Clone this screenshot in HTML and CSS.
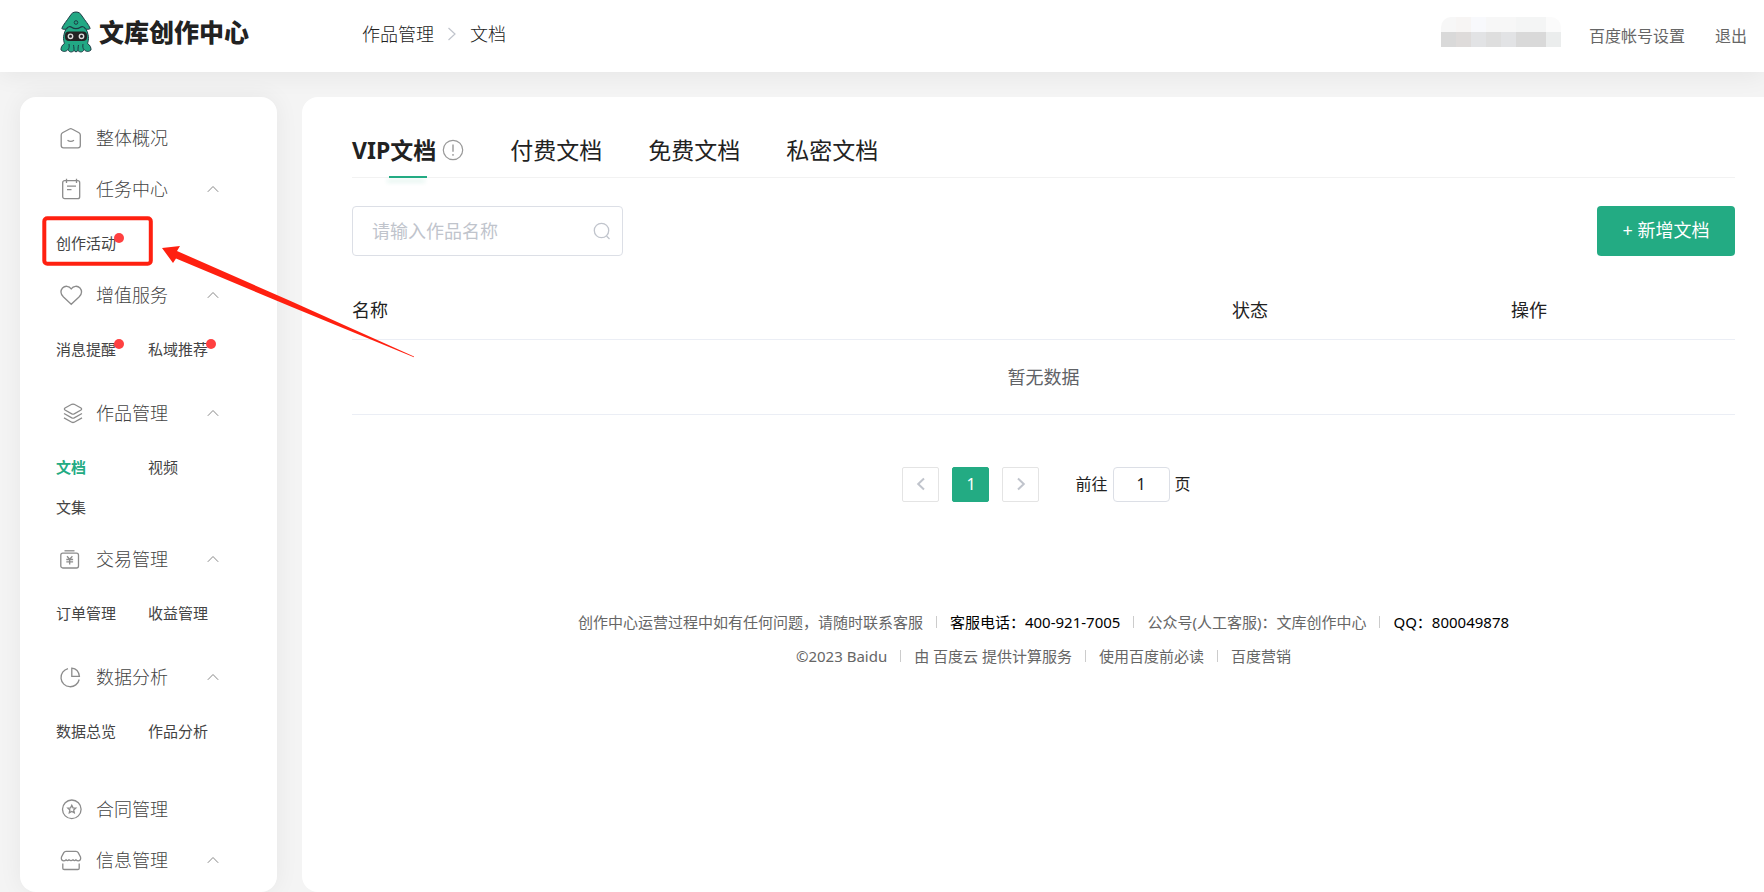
FILE: index.html
```html
<!DOCTYPE html>
<html lang="zh-CN">
<head>
<meta charset="utf-8">
<title>文库创作中心</title>
<link rel="stylesheet" href="styles.css">
</head>
<body>
<header class="header">
  <a class="logo" href="#">
    <svg class="logo-mark" width="32" height="42" viewBox="0 0 32 42" aria-hidden="true">
      <path d="M6 18C2 26 4 31 4.500 32.500C2 34 .8 36.500 1 39C3 41 6 41 8 38.500C8.500 41 12 42 14 39.500L16 41L18 39.500C20 42 23.500 41 24 38.500C26 41 29 41 31 39C31.200 36.500 30 34 27.500 32.500C28 31 30 26 26 18Z" fill="#22a884" stroke="#1d3a44" stroke-width="1"/>
      <path d="M16 1C13 1 11.500 2.500 10 5C7 9.500 3 14 1.800 17.500C3 18.500 5 18.500 6.500 17.800C6 20 5.500 21 5.500 22.500H26.500C26.500 21 26 20 25.500 17.800C27 18.500 29 18.500 30.200 17.500C29 14 25 9.500 22 5C20.500 2.500 19 1 16 1Z" fill="#22a884"/>
      <path d="M6.500 17.800C5 18.500 3 18.500 1.800 17.500C3 14 7 9.500 10 5C11.500 2.500 13 1 16 1C19 1 20.500 2.500 22 5C25 9.500 29 14 30.200 17.500C29 18.500 27 18.500 25.500 17.800" fill="none" stroke="#1d3a44"/>
      <path d="M6.500 17.800C8 15.500 10 15 12 16.500C14 18 18 18 20 16.500C22 15 24 15.500 25.500 17.800" fill="none" stroke="#1d3a44" stroke-width="1.200"/>
      <circle cx="16" cy="11.500" r="1.800" fill="none" stroke="#1d3a44"/>
      <rect x="5" y="20.500" width="22" height="9.500" rx="4" fill="#222"/>
      <circle cx="10.500" cy="25.300" r="2.200" fill="#222" stroke="#ddd" stroke-width="1.400"/>
      <circle cx="21.500" cy="25.300" r="2.200" fill="#222" stroke="#ddd" stroke-width="1.400"/>
      <path d="M9 33C9.500 36 9 37.500 8 38.500M13.500 34C14 36.500 14 38 14 39.500M18.500 34C18 36.500 18 38 18 39.500M23 33C22.500 36 23 37.500 24 38.500" fill="none" stroke="#1d3a44"/>
    </svg>
    <span class="logo-text">文库创作中心</span>
  </a>
  <nav class="crumbs" aria-label="面包屑">
    <a href="#">作品管理</a>
    <svg width="10" height="14" viewBox="0 0 10 14" aria-hidden="true"><path d="M1.500 1L8 7L1.500 13" fill="none" stroke="#c0c4cc" stroke-width="1.200"/></svg>
    <span>文档</span>
  </nav>
  <div class="account">
    <div class="user-mask" aria-hidden="true">
      <i class="m1"></i><i class="m2"></i><i class="m3"></i><i class="m1"></i><i class="m1"></i><i class="m4"></i><i class="m4"></i><i class="m5"></i>
      <i class="m6"></i><i class="m7"></i><i class="m8"></i><i class="m9"></i><i class="m8"></i><i class="m6"></i><i class="m6"></i><i class="m10"></i>
    </div>
    <a href="#">百度帐号设置</a>
    <a href="#">退出</a>
  </div>
</header>

<div class="page">
  <nav class="sidebar" aria-label="主菜单">
    <a class="menu-item" href="#">
      <svg class="icon" viewBox="0 0 24 24"><path d="M10.500 3Q11.800 2.300 13 3L20 6.800Q21.300 7.600 21.300 9V19.500Q21.300 21.800 19 21.800H4.500Q2.200 21.800 2.200 19.500V9Q2.200 7.600 3.500 6.800Z"/><path d="M8.500 14.200Q11.700 16.500 15 14.200"/></svg>
      <span>整体概况</span>
    </a>
    <button class="menu-item" type="button">
      <svg class="icon" viewBox="0 0 24 24"><rect x="3.700" y="3.700" width="17" height="18" rx="2"/><path d="M7.500 1.800V6M17.500 1.800V6M8 9.200H17M8 12.700H12.500"/></svg>
      <span>任务中心</span>
      <svg class="caret" viewBox="0 0 12 8"><path d="M.8 6.800L6 1.500L11.200 6.800"/></svg>
    </button>
    <div class="submenu">
      <a href="#"><span class="dotted">创作活动</span></a>
    </div>
    <button class="menu-item" type="button">
      <svg class="icon" viewBox="0 0 24 24"><path d="M12.200 21.300L4.500 14C1.500 11 1.500 7.500 3.500 5C6 2.400 10 2.800 12.200 5.800C14.400 2.800 18.500 2.400 21 5C23 7.500 23 11 20 14Z"/></svg>
      <span>增值服务</span>
      <svg class="caret" viewBox="0 0 12 8"><path d="M.8 6.800L6 1.500L11.200 6.800"/></svg>
    </button>
    <div class="submenu submenu-mid">
      <a href="#"><span class="dotted">消息提醒</span></a>
      <a href="#"><span class="dotted">私域推荐</span></a>
    </div>
    <button class="menu-item" type="button">
      <svg class="icon" viewBox="0 0 24 24"><path d="M12.800 3.300Q14 2.800 15.200 3.300L22 7Q23.200 8 22 9L15.200 12.900Q14 13.500 12.800 12.900L6 9Q4.800 8 6 7ZM5 12.500L12.800 16.900Q14 17.500 15.200 16.900L23 12.500M5 16.900L12.800 21.200Q14 21.800 15.200 21.200L23 16.900"/></svg>
      <span>作品管理</span>
      <svg class="caret" viewBox="0 0 12 8"><path d="M.8 6.800L6 1.500L11.200 6.800"/></svg>
    </button>
    <div class="submenu">
      <a class="active" href="#">文档</a>
      <a href="#">视频</a>
      <a href="#">文集</a>
    </div>
    <button class="menu-item" type="button">
      <svg class="icon" viewBox="0 0 24 24"><rect x="1.800" y="6.200" width="17.700" height="14.800" rx="2"/><path d="M5.500 3.800H15.500"/><path d="M8 9.200L10.700 12.200L13.400 9.200M10.700 12.200V17.500M7.300 12.500H14.100M7.300 14.800H14.100"/></svg>
      <span>交易管理</span>
      <svg class="caret" viewBox="0 0 12 8"><path d="M.8 6.800L6 1.500L11.200 6.800"/></svg>
    </button>
    <div class="submenu submenu-mid">
      <a href="#">订单管理</a>
      <a href="#">收益管理</a>
    </div>
    <button class="menu-item" type="button">
      <svg class="icon" viewBox="0 0 24 24"><path d="M9 3.600A9.200 9.200 0 1 0 20.200 14.500"/><path d="M12.800 3.200Q19.500 4 20.400 11.300H12.800Z"/></svg>
      <span>数据分析</span>
      <svg class="caret" viewBox="0 0 12 8"><path d="M.8 6.800L6 1.500L11.200 6.800"/></svg>
    </button>
    <div class="submenu submenu-tall">
      <a href="#">数据总览</a>
      <a href="#">作品分析</a>
    </div>
    <a class="menu-item" href="#">
      <svg class="icon" viewBox="0 0 24 24"><circle cx="12.800" cy="12.300" r="9.300"/><path d="M12.800 8.200L14 10.800L16.800 11.100L14.700 13L15.300 15.800L12.800 14.400L10.300 15.800L10.900 13L8.800 11.100L11.600 10.800Z"/></svg>
      <span>合同管理</span>
    </a>
    <button class="menu-item" type="button">
      <svg class="icon" viewBox="0 0 24 24"><path d="M7 3.300H17Q18.500 3.300 19.200 4.600L21.500 9Q22.300 12.300 19.500 12.800Q17.800 12.800 17 11.800Q15.500 13.500 14 11.800Q12 13.500 10 11.800Q8.500 13.500 7 11.800Q6.200 12.800 4.500 12.800Q1.700 12.300 2.500 9L4.800 4.600Q5.500 3.300 7 3.300ZM3.800 15.500V20.200Q3.800 21.500 5.200 21.500H18.800Q20.200 21.500 20.200 20.200V15.500"/></svg>
      <span>信息管理</span>
      <svg class="caret" viewBox="0 0 12 8"><path d="M.8 6.800L6 1.500L11.200 6.800"/></svg>
    </button>
  </nav>

  <main class="content">
    <div class="tabs" role="tablist">
      <button class="tab tab-active" type="button" role="tab" aria-selected="true">VIP文档
        <svg width="22" height="22" viewBox="0 0 22 22" aria-hidden="true"><circle cx="11" cy="11" r="9.700" fill="none" stroke="#999" stroke-width="1.200"/><path d="M11 5.500V12.800M11 15V16.800" stroke="#999" stroke-width="1.400"/></svg>
      </button>
      <button class="tab" type="button" role="tab">付费文档</button>
      <button class="tab" type="button" role="tab">免费文档</button>
      <button class="tab" type="button" role="tab">私密文档</button>
    </div>

    <div class="toolbar">
      <label class="search">
        <input type="text" placeholder="请输入作品名称" aria-label="作品名称">
        <svg width="18" height="18" viewBox="0 0 18 18" aria-hidden="true"><circle cx="8.500" cy="8.500" r="7.200" fill="none" stroke="#c0c4cc" stroke-width="1.300"/><path d="M13.500 14L16.500 17" stroke="#c0c4cc" stroke-width="1.300"/></svg>
      </label>
      <button class="primary" type="button">+ 新增文档</button>
    </div>

    <table class="works">
      <thead>
        <tr><th class="col-name">名称</th><th class="col-state">状态</th><th>操作</th></tr>
      </thead>
      <tbody>
        <tr><td colspan="3">暂无数据</td></tr>
      </tbody>
    </table>

    <div class="pager">
      <button class="page-btn" type="button" aria-label="上一页" disabled><svg width="10" height="14" viewBox="0 0 10 14"><path d="M8 1.500L2.200 7L8 12.500" fill="none" stroke="#c0c4cc" stroke-width="2"/></svg></button>
      <button class="page-btn page-current" type="button">1</button>
      <button class="page-btn" type="button" aria-label="下一页" disabled><svg width="10" height="14" viewBox="0 0 10 14"><path d="M2 1.500L7.800 7L2 12.500" fill="none" stroke="#c0c4cc" stroke-width="2"/></svg></button>
      <label class="jump">前往<input type="text" value="1">页</label>
    </div>

    <footer class="footer">
      <div class="footer-row">
        <span>创作中心运营过程中如有任何问题，请随时联系客服</span>
        <span class="strong">客服电话：400-921-7005</span>
        <span>公众号(人工客服)：文库创作中心</span>
        <span class="strong">QQ：800049878</span>
      </div>
      <div class="footer-row">
        <span>©2023 Baidu</span>
        <span>由 <a href="#">百度云</a> 提供计算服务</span>
        <a href="#">使用百度前必读</a>
        <a href="#">百度营销</a>
      </div>
    </footer>
  </main>

  <svg class="callout" width="380" height="150" viewBox="40 212 380 150" aria-hidden="true">
    <rect x="44.300" y="218.300" width="106.500" height="45.500" rx="3" fill="none" stroke="#ff2010" stroke-width="4"/>
    <path d="M162 248L180 246L177 251L290 300.800L414 356.500V357.300L290 306.200L176 258.500L173 263Z" fill="#ff2010"/>
  </svg>
</div>
</body>
</html>
```
FILE: styles.css
```css
* {
  box-sizing: border-box;
}

body {
  margin: 0;
  min-height: 100vh;
  display: flex;
  flex-direction: column;
  background: #f4f4f4;
  color: #222;
  font-family: "Noto Sans", "Noto Sans CJK SC", sans-serif;
  font-size: 18px;
  line-height: 24px;
}

a {
  color: inherit;
  text-decoration: none;
}

button,
input {
  margin: 0;
  font: inherit;
  color: inherit;
}

.header {
  display: flex;
  align-items: center;
  height: 72px;
  padding: 0 17px 0 60px;
  background: #fff;
  box-shadow: 0 4px 24px rgba(0, 0, 0, 0.06);
}

.logo {
  display: flex;
  align-items: center;
  gap: 7px;
  width: 302px;
  padding-bottom: 8px;
}

.logo-text {
  font-size: 25px;
  font-weight: 900;
}

.crumbs {
  display: flex;
  align-items: center;
  gap: 13px;
  padding-bottom: 4px;
  font-weight: 300;
}

.account {
  display: flex;
  align-items: center;
  gap: 30px;
  margin-left: auto;
  color: #666;
  font-size: 16px;
}

.user-mask {
  display: grid;
  grid-template-columns: repeat(8, 15px);
  grid-auto-rows: 15px;
  margin: 0 -2px 8px 0;
  border-radius: 10px 10px 0 0;
  overflow: hidden;
}

.m1 { background: #f7f7f7; }
.m2 { background: #f7f5f4; }
.m3 { background: #f8f9fc; }
.m4 { background: #f4f5f5; }
.m5 { background: #fbfbfb; }
.m6 { background: #d9d9d9; }
.m7 { background: #dedbda; }
.m8 { background: #e2e3e5; }
.m9 { background: #dedede; }
.m10 { background: #ebeded; }

.page {
  position: relative;
  display: flex;
  flex: 1;
  align-items: stretch;
  gap: 25px;
  padding: 25px 0 0 20px;
}

.sidebar {
  flex: 0 0 257px;
  padding: 15px 0 6px;
  background: #fff;
  border-radius: 16px;
  box-shadow: 0 0 24px rgba(0, 0, 0, 0.06);
}

.menu-item {
  display: flex;
  align-items: center;
  gap: 13px;
  width: 100%;
  height: 51px;
  padding: 0 58px 0 39px;
  border: 0;
  background: none;
  color: #444;
  font-weight: 300;
  text-align: left;
}

.icon {
  width: 24px;
  height: 24px;
  fill: none;
  stroke: #8c8c8c;
  stroke-width: 1.3;
}

.caret {
  width: 12px;
  height: 8px;
  margin-left: auto;
  fill: none;
  stroke: #888;
}

.submenu {
  display: grid;
  grid-template-columns: 92px 92px;
  grid-auto-rows: 40px;
  align-items: center;
  padding: 9px 0 6px 36px;
  color: #444;
  font-size: 15px;
}

.submenu-mid {
  padding-bottom: 18px;
}

.submenu-tall {
  padding-bottom: 32px;
}

.active {
  color: #23ab83;
  font-weight: 700;
}

.dotted {
  position: relative;
}

.dotted::after {
  content: "";
  position: absolute;
  top: 0;
  right: -8px;
  width: 10px;
  height: 10px;
  border-radius: 50%;
  background: #ff4040;
}

.content {
  flex: 1;
  padding: 29px 29px 29px 50px;
  background: #fff;
  border-radius: 16px 0 0 16px;
}

.tabs {
  display: flex;
  gap: 46px;
  border-bottom: 1px solid #f2f2f2;
}

.tab {
  position: relative;
  display: flex;
  align-items: center;
  gap: 6px;
  height: 51px;
  padding: 0 0 4px;
  border: 0;
  background: none;
  font-size: 23px;
}

.tab-active {
  font-weight: 700;
}

.tab-active::after {
  content: "";
  position: absolute;
  left: 50%;
  bottom: -1px;
  width: 38px;
  height: 2px;
  margin-left: -19px;
  background: #23ab83;
  box-shadow: -2px 4px 4px rgba(35, 171, 131, 0.2);
}

.toolbar {
  display: flex;
  align-items: center;
  justify-content: space-between;
  padding: 28px 0 30px;
}

.search {
  display: flex;
  align-items: center;
  width: 271px;
  height: 50px;
  padding: 0 11px 0 19px;
  border: 1px solid #dcdfe6;
  border-radius: 4px;
}

.search input {
  flex: 1;
  min-width: 0;
  padding: 0;
  border: 0;
  outline: 0;
  background: none;
}

.search input::placeholder {
  color: #c0c4cc;
  opacity: 1;
}

.primary {
  width: 138px;
  height: 50px;
  padding: 0 0 2px;
  border: 0;
  border-radius: 4px;
  background: #23ab83;
  color: #fff;
}

.works {
  width: 100%;
  border-collapse: collapse;
  table-layout: fixed;
}

.works th,
.works td {
  padding: 0;
  border-bottom: 1px solid #ebeef5;
  font-weight: 400;
}

.works th {
  height: 53px;
  padding-bottom: 4px;
  text-align: left;
}

.works td {
  height: 75px;
  color: #606266;
  text-align: center;
}

.col-name {
  width: 880px;
}

.col-state {
  width: 279px;
}

.pager {
  display: flex;
  align-items: center;
  justify-content: center;
  gap: 13px;
  padding: 52px 0 108px 6px;
  font-size: 16px;
}

.page-btn {
  display: grid;
  place-items: center;
  width: 37px;
  height: 35px;
  padding: 0;
  border: 1px solid #e4e4e4;
  border-radius: 2px;
  background: #fff;
}

.page-current {
  border-color: #23ab83;
  background: #23ab83;
  color: #fff;
}

.jump {
  display: flex;
  align-items: center;
  gap: 5px;
  margin-left: 23px;
}

.jump input {
  width: 57px;
  height: 35px;
  padding: 0;
  border: 1px solid #dcdfe6;
  border-radius: 4px;
  text-align: center;
}

.footer {
  display: grid;
  gap: 10px;
  color: #666;
  font-size: 15px;
}

.footer-row {
  display: flex;
  justify-content: center;
}

.footer-row > * {
  display: flex;
  align-items: center;
  white-space: pre;
}

.footer-row > * + *::before {
  content: "";
  width: 1px;
  height: 12px;
  margin: 0 13px;
  background: #ccc;
}

.strong {
  color: #000;
}

.callout {
  position: absolute;
  top: 140px;
  left: 40px;
  pointer-events: none;
}
```
